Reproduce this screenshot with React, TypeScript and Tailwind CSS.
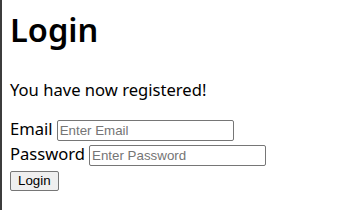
export default function App() {
  return (
    <div className="h-[210px] w-[337px] overflow-hidden border-l-2 border-[#3c3c3c] bg-white pl-2 font-['Noto_Sans',sans-serif] text-black">
      <h1 className="mt-[11px] text-[32.6px] font-semibold leading-[37px]">Login</h1>
      <p className="mt-[32px] text-[16.6px] leading-[19px]">You have now registered!</p>
      <form className="mt-[20px] flex flex-col" onSubmit={(e) => e.preventDefault()}>
        <div className="flex h-[25px] items-baseline gap-[4px]">
          <label className="text-[16.6px] leading-[19px]">Email</label>
          <input
            type="text"
            placeholder="Enter Email"
            className="h-[21px] w-[177px] rounded-[2px] border border-[#767676] px-[2px] font-['Liberation_Sans',Arial,sans-serif] text-[13.33px] placeholder:text-[#757575]"
          />
        </div>
        <div className="flex h-[23px] items-baseline gap-[4px]">
          <label className="text-[16.6px] leading-[19px]">Password</label>
          <input
            type="password"
            placeholder="Enter Password"
            className="h-[21px] w-[177px] rounded-[2px] border border-[#767676] px-[2px] font-['Liberation_Sans',Arial,sans-serif] text-[13.33px] placeholder:text-[#757575]"
          />
        </div>
        <div>
          <button
            type="submit"
            className="h-[20px] rounded-[2px] border border-[#767676] bg-[#efefef] px-[7px] font-['Liberation_Sans',Arial,sans-serif] text-[13.33px] leading-[15px]"
          >
            Login
          </button>
        </div>
      </form>
    </div>
  );
}
